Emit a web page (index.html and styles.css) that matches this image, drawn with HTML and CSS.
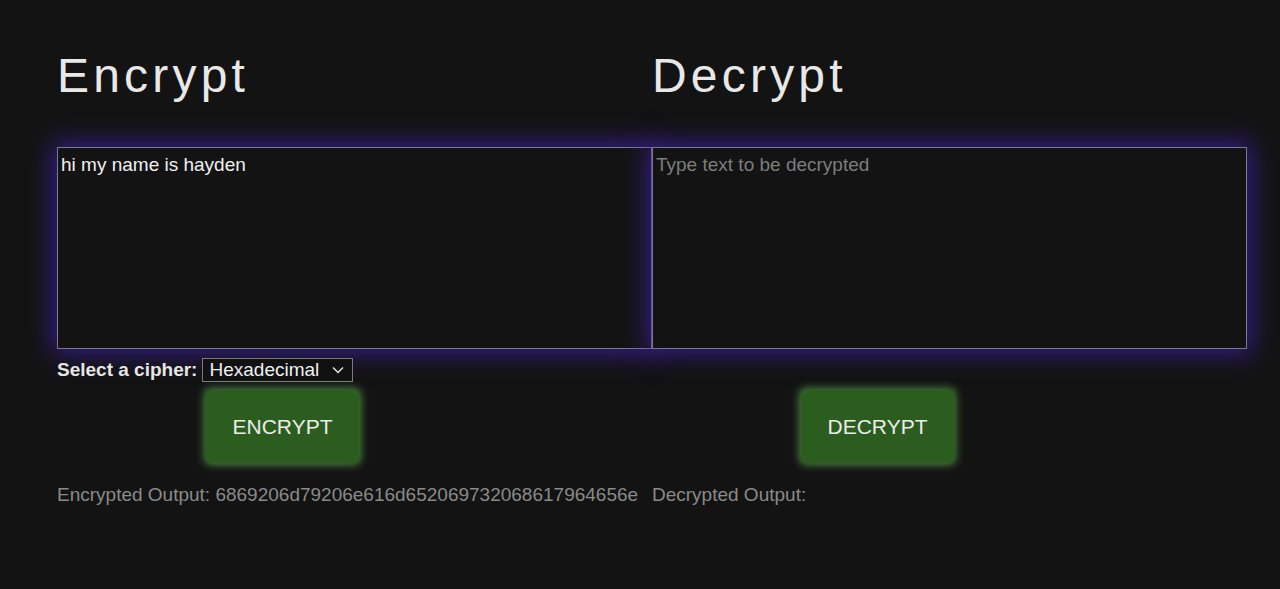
FILE: index.html
```html
<!DOCTYPE html>
<html lang="en">
<head>
  <meta charset="UTF-8" />
  <title>Cipher Tool</title>
  <link rel="stylesheet" href="styles.css">
</head>
<body>
  <div class="tool">
    <div class="panel">
      <h1 class="title">Encrypt</h1>
      <textarea id="encrypt-input" class="box" placeholder="Type text to be encrypted">hi my name is hayden</textarea>
      <div class="cipher-row">
        <label for="cipher">Select a cipher:</label>
        <div class="select">
          <span>Hexadecimal</span>
          <svg width="12" height="8" viewBox="0 0 12 8"><path d="M1 1.5 L6 6.5 L11 1.5" fill="none" stroke="#e8e8e8" stroke-width="1.4"/></svg>
        </div>
      </div>
      <button class="run">ENCRYPT</button>
      <p class="output">Encrypted Output: 6869206d79206e616d652069732068617964656e</p>
    </div>
    <div class="panel">
      <h1 class="title">Decrypt</h1>
      <textarea id="decrypt-input" class="box" placeholder="Type text to be decrypted"></textarea>
      <div class="cipher-row"></div>
      <button class="run">DECRYPT</button>
      <p class="output">Decrypted Output:</p>
    </div>
  </div>
</body>
</html>
```

FILE: styles.css
```css
* { box-sizing: border-box; }
body {
  margin: 0;
  background: #131313;
  font-family: 'Liberation Sans', Arial, sans-serif;
  color: #e6e6e6;
}
.tool {
  display: flex;
  padding: 48px 0 0 57px;
}
.panel {
  width: 595px;
  display: flex;
  flex-direction: column;
  align-items: flex-start;
}
.title {
  margin: 0 0 44px;
  font-size: 48px;
  font-weight: normal;
  letter-spacing: 4.2px;
  line-height: 55px;
  color: #e8e8e8;
}
.box {
  width: 595px;
  height: 202px;
  margin: 0;
  padding: 6px 3px;
  background: #131313;
  color: #f0f0f0;
  border: 1px solid #7b7894;
  font-family: 'Liberation Sans', Arial, sans-serif;
  font-size: 19px;
  resize: none;
  outline: none;
  box-shadow: 0 0 24px 4px rgba(64, 36, 180, 0.75);
}
.box::placeholder { color: #7d7d7d; }
.cipher-row {
  height: 24px;
  margin-top: 9px;
  display: flex;
  align-items: center;
  gap: 5px;
  font-size: 19px;
  font-weight: bold;
}
.select {
  width: 151px;
  height: 24px;
  display: flex;
  align-items: center;
  justify-content: space-between;
  padding: 0 8px 0 6px;
  border: 1px solid #7a7a7a;
  background: #111;
  font-weight: normal;
  color: #f0f0f0;
}
.run {
  margin: 8px 0 0 149px;
  width: 153px;
  height: 73px;
  background: #2b5e1e;
  color: #ececec;
  border: none;
  border-radius: 5px;
  font-family: 'Liberation Sans', Arial, sans-serif;
  font-size: 21px;
  box-shadow: 0 0 8px 2px rgba(120, 220, 100, 0.55);
}
.output {
  margin: 21px 0 0;
  font-size: 19px;
  color: #8a8a8a;
  white-space: nowrap;
}
```
